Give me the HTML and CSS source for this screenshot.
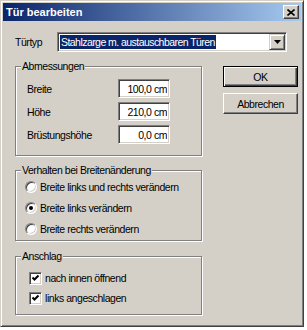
FILE: index.html
```html
<!DOCTYPE html>
<html lang="de">
<head>
  <meta charset="UTF-8">
  <meta name="viewport" content="width=device-width, initial-scale=1.0">
  <title>Tür bearbeiten</title>
  <link rel="stylesheet" href="styles.css">
</head>
<body>
  <div class="dialog">
    <div class="titlebar">
      <span class="title">Tür bearbeiten</span>
      <button type="button" class="close-btn" aria-label="Schließen">
        <svg width="8" height="7" viewBox="0 0 8 7"><path d="M0.5 0.5 L7.5 6.5 M7.5 0.5 L0.5 6.5" stroke="#000" stroke-width="1.6" fill="none"/></svg>
      </button>
    </div>

    <div class="dialog-body">
      <div class="type-row">
        <label class="type-label">Türtyp</label>
        <div class="combo">
          <span class="combo-value">Stahlzarge m. austauschbaren Türen</span>
          <span class="combo-arrow">
            <svg width="7" height="4" viewBox="0 0 7 4"><polygon points="0,0 7,0 3.5,4" fill="#000"/></svg>
          </span>
        </div>
      </div>

      <div class="main-row">
        <div class="groups">
          <fieldset class="group group-size">
            <legend>Abmessungen</legend>
            <div class="field-row">
              <label for="breite">Breite</label>
              <input type="text" id="breite" class="edit" value="100,0 cm" readonly>
            </div>
            <div class="field-row">
              <label for="hoehe">Höhe</label>
              <input type="text" id="hoehe" class="edit" value="210,0 cm" readonly>
            </div>
            <div class="field-row">
              <label for="bruestung">Brüstungshöhe</label>
              <input type="text" id="bruestung" class="edit" value="0,0 cm" readonly>
            </div>
          </fieldset>

          <fieldset class="group group-mode">
            <legend>Verhalten bei Breitenänderung</legend>
            <div class="option radio-option"><span class="radio"></span>Breite links und rechts verändern</div>
            <div class="option radio-option"><span class="radio checked"></span>Breite links verändern</div>
            <div class="option radio-option"><span class="radio"></span>Breite rechts verändern</div>
          </fieldset>

          <fieldset class="group group-hinge">
            <legend>Anschlag</legend>
            <div class="option check-option">
              <span class="check"><svg width="9" height="9" viewBox="0 0 9 9"><path d="M1.5 3.5 L3.5 5.5 L7.5 1.5" stroke="#000" stroke-width="2" fill="none"/></svg></span>nach innen öffnend
            </div>
            <div class="option check-option">
              <span class="check"><svg width="9" height="9" viewBox="0 0 9 9"><path d="M1.5 3.5 L3.5 5.5 L7.5 1.5" stroke="#000" stroke-width="2" fill="none"/></svg></span>links angeschlagen
            </div>
          </fieldset>
        </div>

        <div class="buttons">
          <button type="button" class="btn btn-default">OK</button>
          <button type="button" class="btn">Abbrechen</button>
        </div>
      </div>
    </div>
  </div>
</body>
</html>
```

FILE: styles.css
```css
* {
  margin: 0;
  padding: 0;
  box-sizing: border-box;
}

body {
  background: #ffffff;
  font-family: "Liberation Sans", Arial, sans-serif;
  font-size: 10.5px;
  letter-spacing: -0.45px;
  color: #000;
}

.dialog {
  width: 304px;
  height: 327px;
  background: #d4d0c8;
  border: 1px solid;
  border-color: #d4d0c8 #404040 #404040 #d4d0c8;
  box-shadow: inset 1px 1px #fff, inset -1px -1px #808080;
  padding: 2px;
  display: flex;
  flex-direction: column;
}

.titlebar {
  height: 18px;
  display: flex;
  align-items: center;
  padding: 0 2px 0 3px;
  background: linear-gradient(90deg, #0a246a 0%, #a6caf0 100%);
}

.title {
  flex: 1;
  color: #fff;
  font-weight: bold;
  font-size: 11px;
  letter-spacing: 0;
}

.close-btn {
  width: 16px;
  height: 14px;
  background: #d4d0c8;
  border: 1px solid;
  border-color: #fff #404040 #404040 #fff;
  box-shadow: inset -1px -1px #808080;
  display: flex;
  align-items: center;
  justify-content: center;
}

.dialog-body {
  flex: 1;
  padding: 11px 3px 0 12px;
}

.type-row {
  display: flex;
  align-items: center;
}

.type-label {
  width: 42px;
}

.combo {
  width: 230px;
  height: 20px;
  background: #fff;
  border: 1px solid;
  border-color: #808080 #fff #fff #808080;
  box-shadow: inset 1px 1px #404040, inset -1px -1px #d4d0c8;
  padding: 1px;
  display: flex;
  align-items: center;
}

.combo-value {
  flex: 0 0 auto;
  margin-left: 1px;
  height: 14px;
  line-height: 14px;
  padding: 0 1px;
  letter-spacing: -0.55px;
  background: #0a246a;
  color: #fff;
}

.combo-arrow {
  margin-left: auto;
  width: 16px;
  height: 16px;
  background: #d4d0c8;
  border: 1px solid;
  border-color: #d4d0c8 #404040 #404040 #d4d0c8;
  box-shadow: inset 1px 1px #fff, inset -1px -1px #808080;
  display: flex;
  align-items: center;
  justify-content: center;
}

.main-row {
  display: flex;
  margin-top: 7px;
}

.groups {
  width: 187px;
  display: flex;
  flex-direction: column;
  gap: 7px;
}

.group {
  border: 1px solid #808080;
  box-shadow: inset 1px 1px #fff, 1px 1px #fff;
  padding: 0 0 0 5px;
}

.group legend {
  padding: 0 1px;
  line-height: 14px;
  background: #d4d0c8;
}

.group-size {
  padding-top: 6px;
  padding-bottom: 11px;
  display: flex;
  flex-direction: column;
  gap: 4px;
}

.group-mode {
  padding-bottom: 1px;
}

.group-mode .radio-option:first-of-type {
  margin-top: -1px;
}

.group-hinge {
  margin-top: 1px;
  padding-top: 5px;
  padding-bottom: 6px;
}

.field-row {
  display: flex;
  align-items: center;
  height: 19px;
  padding-left: 6px;
}

.field-row label {
  width: 91px;
}

.edit {
  width: 52px;
  height: 19px;
  font: inherit;
  letter-spacing: inherit;
  color: #000;
  text-align: right;
  background: #fff;
  border: 1px solid;
  border-color: #808080 #fff #fff #808080;
  box-shadow: inset 1px 1px #404040, inset -1px -1px #d4d0c8;
  padding: 0 2px;
  outline: none;
}

.option {
  display: flex;
  align-items: center;
}

.radio-option {
  height: 21px;
  padding-left: 4px;
}

.check-option {
  height: 20px;
  padding-left: 8px;
}

.radio {
  width: 12px;
  height: 12px;
  margin-right: 3px;
  border-radius: 50%;
  background: #fff;
  border: 1px solid;
  border-color: #808080 #fff #fff #808080;
  box-shadow: inset 1px 1px #404040, inset -1px -1px #d4d0c8;
  display: flex;
  align-items: center;
  justify-content: center;
}

.radio.checked::after {
  content: '';
  width: 4px;
  height: 4px;
  border-radius: 50%;
  background: #000;
}

.check {
  width: 13px;
  height: 13px;
  margin-right: 3px;
  background: #fff;
  border: 1px solid;
  border-color: #808080 #fff #fff #808080;
  box-shadow: inset 1px 1px #404040, inset -1px -1px #d4d0c8;
  display: flex;
  align-items: center;
  justify-content: center;
}

.buttons {
  margin-left: auto;
  margin-top: 7px;
  width: 75px;
  display: flex;
  flex-direction: column;
  gap: 6px;
}

.btn {
  height: 21px;
  font: inherit;
  letter-spacing: inherit;
  color: #000;
  background: #d4d0c8;
  border: 1px solid;
  border-color: #fff #404040 #404040 #fff;
  box-shadow: inset -1px -1px #808080;
}

.btn-default {
  border-color: #000;
  box-shadow: inset 1px 1px #fff, inset -1px -1px #404040, inset -2px -2px #808080;
}
```
